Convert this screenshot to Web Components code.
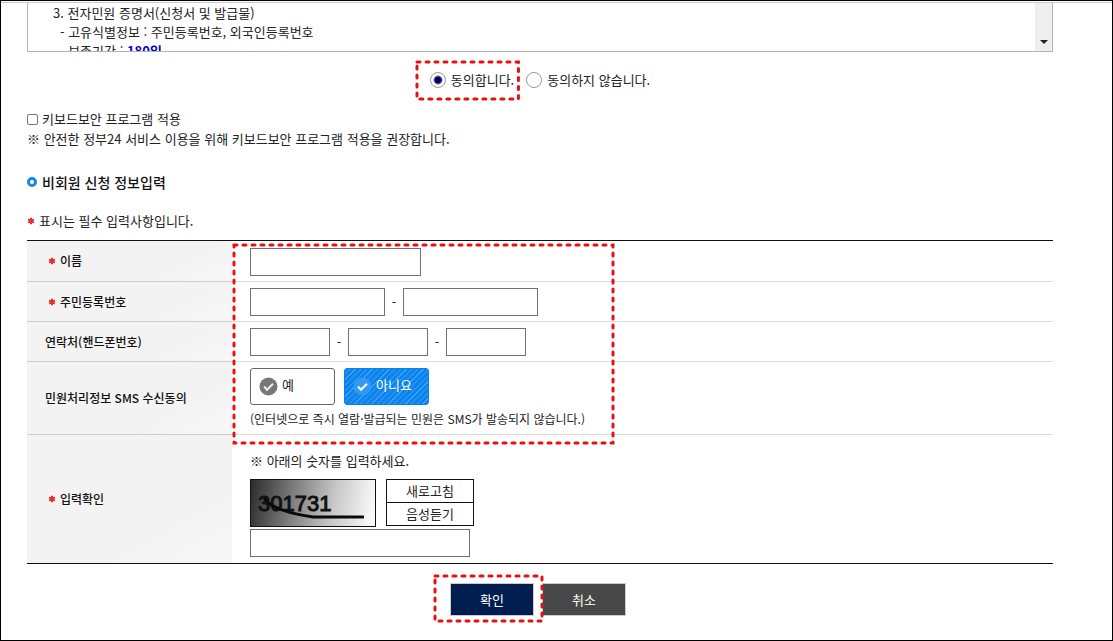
<!DOCTYPE html>
<html lang="ko">
<head>
<meta charset="utf-8">
<meta name="viewport" content="width=device-width, initial-scale=1">
<title>비회원 신청 정보입력</title>
<style>
  html, body { margin: 0; }
  body { font-family: "Noto Sans CJK KR", sans-serif; font-size: 13px; line-height: 20px; color: #222; background: #fff; }
</style>
</head>
<body>
<application-page></application-page>
<script>
class BaseElement extends HTMLElement {
  constructor() {
    super();
    const template = document.createElement('template');
    template.innerHTML = '<style>*{box-sizing:border-box}</style>' + this.constructor.markup;
    this.attachShadow({ mode: 'open' }).append(template.content.cloneNode(true));
  }
}

/* Rounded red dashes drawn over the area of the nearest positioned ancestor. */
customElements.define('dash-frame', class extends BaseElement {
  static markup = `
    <style>
      :host { display: block; position: absolute; pointer-events: none; z-index: 1; }
      svg { display: block; width: 100%; height: 100%; overflow: visible; }
    </style>
    <svg aria-hidden="true"><rect width="100%" height="100%" fill="none" stroke="#e60f14" stroke-width="3" stroke-linecap="round" stroke-dasharray="3 6"/></svg>`;
});

customElements.define('required-mark', class extends BaseElement {
  static markup = `
    <style>:host { display: inline-block; width: 8px; height: 8px; margin-right: 4px; vertical-align: 1px; } svg { display: block; }</style>
    <svg width="8" height="8" viewBox="0 0 8 8" aria-hidden="true" stroke="#e02f35" stroke-width="2"><path d="M4 .7v6.6M1.1 2.3l5.8 3.4M6.9 2.3 1.1 5.7"/></svg>`;
});

customElements.define('notice-box', class extends BaseElement {
  static markup = `
    <style>
      :host { display: flex; height: 49px; border: solid #b4b4b4; border-width: 0 1px 1px; }
      .text { flex: 1; overflow: hidden; padding-left: 25px; line-height: 19px; }
      .bar { display: flex; align-items: flex-end; justify-content: center; width: 17px; padding-bottom: 7px; background: #eee; }
      svg { display: block; }
    </style>
    <div class="text"><slot></slot></div>
    <div class="bar"><svg width="8" height="4" viewBox="0 0 8 4" aria-hidden="true"><path d="M0 0h8L4 4z" fill="#222"/></svg></div>`;
});

customElements.define('agree-choice', class extends BaseElement {
  static markup = `
    <style>
      :host { display: flex; justify-content: center; gap: 12px; }
      div { display: flex; position: relative; }
      label { display: flex; align-items: center; gap: 5px; }
      input { appearance: none; width: 16px; height: 16px; margin: 0; border: 1px solid #999; border-radius: 50%; background: #fff; }
      input:checked { background: radial-gradient(circle, #000066 3px, #fff 5px); }
      dash-frame { inset: -8px -4px -9px -13px; }
    </style>
    <div><label><input type="radio" name="agree" checked>동의합니다.</label><dash-frame></dash-frame></div>
    <div><label><input type="radio" name="agree">동의하지 않습니다.</label></div>`;
});

customElements.define('keyboard-option', class extends BaseElement {
  static markup = `
    <style>
      :host { display: block; }
      label { display: flex; align-items: center; gap: 4px; }
      input { appearance: none; width: 11px; height: 11px; margin: 0; border: 1px solid #767676; border-radius: 2px; }
      input:checked { background: #0075ff; }
      p { margin: 0; }
    </style>
    <label><input type="checkbox">키보드보안 프로그램 적용</label>
    <p>※ 안전한 정부24 서비스 이용을 위해 키보드보안 프로그램 적용을 권장합니다.</p>`;
});

customElements.define('section-title', class extends BaseElement {
  static markup = `
    <style>
      :host { display: block; }
      h2 { display: flex; align-items: center; gap: 5px; margin: 0; font-size: 14px; font-weight: 500; color: #111; }
      i { width: 10px; height: 10px; border: 3px solid #1b87e5; border-radius: 50%; }
    </style>
    <h2><i></i><slot></slot></h2>`;
});

customElements.define('reply-choice', class extends BaseElement {
  static markup = `
    <style>
      :host { display: flex; gap: 9px; }
      label { display: flex; align-items: center; gap: 4px; position: relative; width: 85px; height: 37px; padding: 0 8px; border: 1px solid #666; border-radius: 3px; }
      input { appearance: none; position: absolute; inset: 0; margin: 0; }
      span { padding-bottom: 4px; }
      svg { color: #777; }
      label:has(:checked) { color: #fff; border-color: #0b80e8; background: repeating-linear-gradient(135deg, #0b84ee 0 3px, #3da0f4 3px 4px); }
      label:has(:checked) svg { color: #3398f2; }
    </style>
    <label><input type="radio" name="sms"><svg width="19" height="19" viewBox="0 0 19 19" aria-hidden="true"><circle cx="9.500" cy="9.500" r="9" fill="currentColor"/><path d="m5 9.500 3 3.200 6-6" fill="none" stroke="#eee" stroke-width="2"/></svg><span>예</span></label>
    <label><input type="radio" name="sms" checked><svg width="19" height="19" viewBox="0 0 19 19" aria-hidden="true"><circle cx="9.500" cy="9.500" r="9" fill="currentColor"/><path d="m5 9.500 3 3.200 6-6" fill="none" stroke="#fff" stroke-width="2"/></svg><span>아니요</span></label>`;
});

customElements.define('captcha-picture', class extends BaseElement {
  static markup = `
    <style>
      :host { display: block; width: 126px; height: 48px; border: 1px solid #111; background: linear-gradient(100deg, #2c2c2c, #8c8c8c 40%, #c8c8c8 66%, #fff); }
      svg { display: block; }
      text { font-family: "Liberation Sans", sans-serif; font-size: 22px; fill: #111; stroke: #111; stroke-width: 1px; }
    </style>
    <svg width="124" height="46" viewBox="0 0 124 46"><text x="7" y="31">301731</text><path d="M13 18q8 13 49 19h51" fill="none" stroke="#0a0a0a" stroke-width="3"/></svg>`;
});

customElements.define('applicant-form', class extends BaseElement {
  static markup = `
    <style>
      :host { display: block; position: relative; }
      table { width: 100%; border-collapse: separate; border-spacing: 0; border-bottom: 1px solid #111; }
      th, td { border-top: 1px solid #ddd; }
      tr:first-child > * { border-top-color: #111; }
      th { width: 205px; padding: 0 0 0 18px; text-align: left; font-size: 12px; font-weight: 500; color: #111; background: linear-gradient(150deg, #f3f3f3 70%, #f8f8f8); }
      th.must { padding-left: 21px; }
      tr:not(:first-child) > th { border-top-color: #ccc; }
      td { padding: 6px 18px 5px; }
      tr:first-child > td { padding-top: 7px; }
      tr:last-child > td { padding: 16px 18px 6px; }
      .line { display: flex; align-items: center; }
      .line span { width: 18px; text-align: center; }
      input { display: block; height: 28px; margin: 0; border: 1px solid #707070; background: #fff; font: inherit; }
      .name { width: 171px; } .id { width: 135px; } .tel { width: 80px; } .code { width: 220px; }
      p { margin: 0; }
      td p.note { margin-top: 4px; font-size: 12px; }
      .captcha { display: flex; gap: 10px; margin: 8px 0 2px; }
      .side { display: flex; flex-direction: column; width: 88px; }
      .side button { height: 24px; margin: 0 0 -1px; padding: 0; border: 1px solid #111; background: #fff; font: inherit; line-height: 20px; color: inherit; }
      dash-frame { top: 5px; left: 207px; width: 379px; height: 198px; }
    </style>
    <table>
      <tr><th class="must" scope="row"><required-mark></required-mark><label for="name">이름</label></th>
        <td><input class="name" id="name"></td></tr>
      <tr><th class="must" scope="row"><required-mark></required-mark><label for="id1">주민등록번호</label></th>
        <td><div class="line"><input class="id" id="id1"><span>-</span><input class="id" type="password" aria-label="주민등록번호 뒷자리"></div></td></tr>
      <tr><th scope="row"><label for="tel1">연락처(핸드폰번호)</label></th>
        <td><div class="line"><input class="tel" id="tel1"><span>-</span><input class="tel" aria-label="연락처 가운데 자리"><span>-</span><input class="tel" aria-label="연락처 끝자리"></div></td></tr>
      <tr><th scope="row">민원처리정보 SMS 수신동의</th>
        <td><reply-choice></reply-choice><p class="note">(인터넷으로 즉시 열람·발급되는 민원은 SMS가 발송되지 않습니다.)</p></td></tr>
      <tr><th class="must" scope="row"><required-mark></required-mark><label for="code">입력확인</label></th>
        <td><p class="guide">※ 아래의 숫자를 입력하세요.</p>
          <div class="captcha"><captcha-picture></captcha-picture><div class="side"><button type="button">새로고침</button><button type="button">음성듣기</button></div></div>
          <input class="code" id="code"></td></tr>
    </table>
    <dash-frame></dash-frame>`;
});

customElements.define('form-actions', class extends BaseElement {
  static markup = `
    <style>
      :host { display: flex; justify-content: center; gap: 8px; padding-right: 4px; }
      div { position: relative; }
      button { display: block; width: 84px; height: 33px; margin: 0; padding: 0; border: 1px solid #ccc; background: #484848; color: #fff; font: inherit; }
      .ok { background: #001d4f; }
      dash-frame { inset: -7px -8px -5px -15px; }
    </style>
    <div><button class="ok" type="button">확인</button><dash-frame></dash-frame></div>
    <div><button type="button">취소</button></div>`;
});

customElements.define('application-page', class extends BaseElement {
  static markup = `
    <style>
      :host { display: block; box-sizing: border-box; min-height: 100vh; border: 1px solid #000; padding-top: 1px; }
      main { padding: 0 59px 22px 26px; border-top: 1px solid #ccc; }
      .sub { padding-left: 7px; }
      b { color: #0000d0; }
      agree-choice { margin-top: 18px; }
      keyboard-option { margin-top: 19px; }
      section-title { margin-top: 23px; }
      .hint { margin: 19px 0 9px; }
      form-actions { margin-top: 19px; }
    </style>
    <main>
      <notice-box>
        <div>3. 전자민원 증명서(신청서 및 발급물)</div>
        <div class="sub">- 고유식별정보 : 주민등록번호, 외국인등록번호</div>
        <div class="sub">- 보존기간 : <b>180일</b></div>
      </notice-box>
      <agree-choice></agree-choice>
      <keyboard-option></keyboard-option>
      <section-title>비회원 신청 정보입력</section-title>
      <p class="hint"><required-mark></required-mark>표시는 필수 입력사항입니다.</p>
      <applicant-form></applicant-form>
      <form-actions></form-actions>
    </main>`;
});
</script>
</body>
</html>
